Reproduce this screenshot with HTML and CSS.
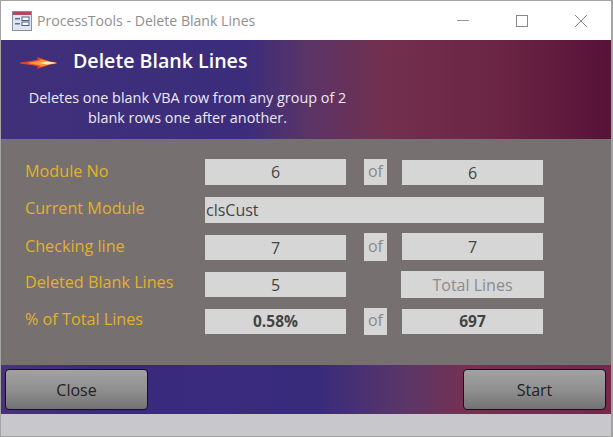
FILE: index.html
```html
<!DOCTYPE html>
<html lang="en">

<head>
    <meta charset="UTF-8">
    <meta name="viewport" content="width=device-width, initial-scale=1.0">
    <title>ProcessTools - Delete Blank Lines</title>
    <link rel="stylesheet" href="styles.css">
</head>

<body>
    <div class="window">
        <!-- Title bar -->
        <div class="titlebar">
            <svg class="app-icon" width="20" height="20" viewBox="0 0 20 20">
                <rect x="0.5" y="0.5" width="19" height="19" fill="#dfe6f2" stroke="#8b8f9c"/>
                <rect x="1" y="1" width="18" height="3" fill="#b5475f"/>
                <rect x="3" y="7" width="5" height="1.5" fill="#5a6f92"/>
                <rect x="3" y="12" width="5" height="1.5" fill="#5a6f92"/>
                <rect x="10" y="6" width="7" height="3.5" fill="#fff" stroke="#4d6187" stroke-width="1"/>
                <rect x="10" y="11" width="7" height="3.5" fill="#fff" stroke="#4d6187" stroke-width="1"/>
            </svg>
            <span class="title-text">ProcessTools - Delete Blank Lines</span>
            <div class="window-buttons">
                <svg width="14" height="14" viewBox="0 0 14 14"><path d="M1 6.5H13" stroke="#999" fill="none"/></svg>
                <svg width="14" height="14" viewBox="0 0 14 14"><rect x="1.5" y="1.5" width="11" height="11" stroke="#888" fill="none"/></svg>
                <svg width="14" height="14" viewBox="0 0 14 14"><path d="M1 1L13 13M13 1L1 13" stroke="#888" fill="none"/></svg>
            </div>
        </div>

        <!-- Header -->
        <div class="header">
            <div class="header-top">
                <svg class="arrow" width="38" height="14" viewBox="0 0 38 14">
                    <path d="M0 6.5L14 4.5L18 3.5L17 1L29 5L38 7L29 9L17 13L18 10.5L14 9.5L0 7.5Z" fill="#e0472a"/>
                    <path d="M7 7L19 4.8L21 3.2L30 5.8L37 7L30 8.2L21 10.8L19 9.2Z" fill="#f9923c"/>
                    <path d="M19 7L27 5.4L37 7L27 8.6Z" fill="#ffeebb"/>
                </svg>
                <h1>Delete Blank Lines</h1>
            </div>
            <p class="intro">Deletes one blank VBA row from any group of 2<br>blank rows one after another.</p>
        </div>

        <!-- Values -->
        <div class="form">
            <div class="row row-module">
                <span class="label label-module">Module No</span>
                <span class="box">6</span>
                <span class="box box-of">of</span>
                <span class="box box-right drop-top">6</span>
            </div>
            <div class="row row-current">
                <span class="label">Current Module</span>
                <span class="box box-wide">clsCust</span>
            </div>
            <div class="row row-checking">
                <span class="label label-checking">Checking line</span>
                <span class="box drop-checking">7</span>
                <span class="box box-of">of</span>
                <span class="box box-right drop-bottom">7</span>
            </div>
            <div class="row">
                <span class="label">Deleted Blank Lines</span>
                <span class="box drop-both">5</span>
                <span class="box box-right box-muted">Total Lines</span>
            </div>
            <div class="row">
                <span class="label">% of Total Lines</span>
                <span class="box box-bold drop-both">0.58%</span>
                <span class="box box-of">of</span>
                <span class="box box-right box-bold drop-both">697</span>
            </div>
        </div>

        <!-- Footer -->
        <div class="footer">
            <button class="btn" type="button">Close</button>
            <button class="btn" type="button">Start</button>
        </div>
        <div class="statusbar"></div>
    </div>
</body>

</html>
```

FILE: styles.css
```css
* {
    box-sizing: border-box;
}

body {
    font-family: "Open Sans", "Noto Sans", Arial, sans-serif;
    margin: 0;
    padding: 0;
    background-color: #fff;
}

.window {
    width: 613px;
    height: 437px;
    display: flex;
    flex-direction: column;
    border-top: 1px solid #a3a3a3;
    border-left: 1px solid #a3a3a3;
    border-right: 2px solid #a3a3a3;
    border-bottom: 1px solid #a3a3a3;
}

.titlebar {
    height: 39px;
    display: flex;
    align-items: center;
    padding-left: 11px;
    background-color: #fff;
}

.app-icon {
    margin-right: 5px;
}

.title-text {
    font-size: 14.1px;
    color: #8f8f8f;
}

.window-buttons {
    margin-left: auto;
    display: flex;
    gap: 45px;
    padding-right: 23px;
}

.header {
    height: 99px;
    color: #fff;
    background: linear-gradient(90deg, #40307a 0%, #3b2d7c 40%, #5a3468 50%, #72304e 63%, #6b2444 82%, #561338 100%);
}

.header-top {
    display: flex;
    align-items: center;
    height: 41px;
    padding-left: 19px;
}

.arrow {
    margin-top: 5px;
    margin-right: 15px;
}

h1 {
    margin: 0;
    font-size: 19.6px;
    font-weight: 600;
    line-height: 40px;
}

.intro {
    margin: 7px 0 0 0;
    width: 373px;
    text-align: center;
    font-size: 14.4px;
    line-height: 20px;
    color: #ece8f4;
}

.form {
    height: 226px;
    padding: 20px 0 0 24px;
    background-color: #767070;
    display: flex;
    flex-direction: column;
    gap: 10px;
}

.row {
    display: grid;
    grid-template-columns: 180px 141px 18px 23px 15px 141px;
    height: 27px;
}

.row-module {
    height: 26px;
    margin-bottom: 2px;
}

.row-current {
    height: 26px;
}

.row-checking {
    height: 28px;
}

.label {
    align-self: start;
    font-size: 16.2px;
    line-height: 22px;
    color: #e3b12c;
}

.label-module {
    margin-top: 1px;
}

.label-checking {
    margin-top: 2px;
}

.box {
    display: flex;
    align-items: center;
    justify-content: center;
    font-size: 16px;
    color: #444;
    background-color: #d6d6d6;
}

.box-of {
    grid-column: 4;
    padding-bottom: 3px;
    color: #8a8a8a;
}

.box-right {
    grid-column: 6;
}

.box-wide {
    grid-column: 2 / 7;
    margin-right: -1px;
    justify-content: flex-start;
    padding-left: 1px;
    padding-bottom: 1px;
}

.box-muted {
    margin: 0 -1px;
    color: #8c8c8c;
}

.box-bold {
    font-weight: 700;
    font-size: 15.5px;
    padding-bottom: 1px;
}

.drop-top {
    margin-top: 1px;
}

.drop-bottom {
    margin-bottom: 1px;
}

.drop-both {
    margin: 1px 0;
}

.drop-checking {
    margin: 2px 0 1px;
}

.footer {
    height: 49px;
    display: flex;
    justify-content: space-between;
    align-items: flex-start;
    padding: 4px 5px 0 4px;
    background: linear-gradient(90deg, #4a3278 0%, #3a2a7e 15%, #392b7c 52%, #5a3668 66%, #78304f 78%, #77264c 100%);
}

.btn {
    width: 143px;
    height: 41px;
    font-family: inherit;
    font-size: 16px;
    color: #222;
    border: 1px solid #14101c;
    border-radius: 4px;
    background: linear-gradient(180deg, #a2a2a2 0%, #909090 50%, #727272 100%);
}

.statusbar {
    flex: 1;
    background-color: #c8c8cc;
}
```
